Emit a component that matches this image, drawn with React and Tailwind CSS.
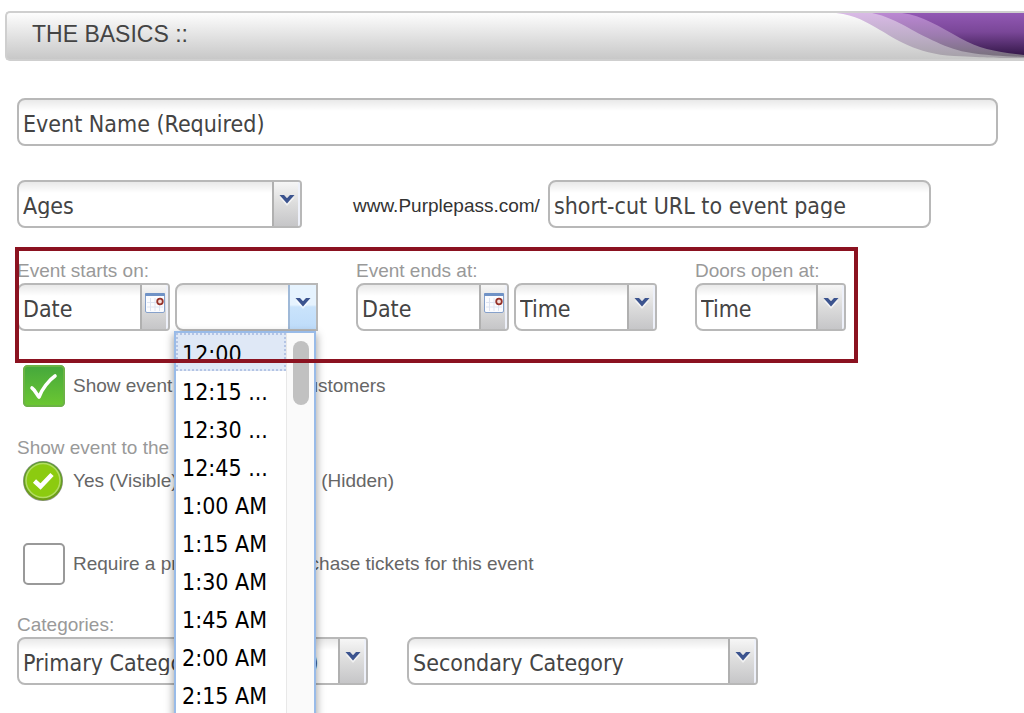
import React, { useState } from 'react';

const times = [
    '12:00', '12:15 ...', '12:30 ...', '12:45 ...', '1:00 AM',
    '1:15 AM', '1:30 AM', '1:45 AM', '2:00 AM', '2:15 AM'
];

const fieldFont = 'font-["DejaVu_Sans_Condensed","DejaVu_Sans",sans-serif] text-[23px] text-[#444] pt-1';

const Chevron = () => (
    <svg className="w-4 h-3" viewBox="0 0 16 12" fill="none">
        <path d="M0.5 2 H5 L8 5 L11 2 H15.5 L8 10.5 Z" fill="#fff" opacity="0.6" transform="translate(0 1.5)" />
        <path d="M0.5 1 H5 L8 4.2 L11 1 H15.5 L8 9.6 Z" fill="#3c548f" />
    </svg>
);

const CalendarIcon = () => (
    <svg className="w-5 h-5" viewBox="0 0 20 20">
        <rect x="0.5" y="0.5" width="19" height="19" rx="1.5" fill="#fbfcff" stroke="#86a1cb" />
        <rect x="0" y="0" width="20" height="3" rx="1" fill="#6f92c6" />
        <path d="M5.5 5 V18 M10 5 V18 M14.5 5 V18 M2 9.5 H18 M2 14 H18" stroke="#dde4f2" />
        <circle cx="15" cy="8.5" r="2.8" fill="#f4dcd6" stroke="#96332b" strokeWidth="1.8" />
    </svg>
);

const boxClass = 'flex h-12 border-2 border-[#b8b8b8] rounded-l-lg bg-linear-to-b from-[#e9e9e9] via-white via-25% to-white overflow-hidden';
const triggerClass = 'flex justify-center shrink-0 w-7 border-l-2 border-[#b0b0b0] bg-linear-to-b from-[#f6f6f6] via-[#dcdcdc] to-[#c6c6c8] shadow-[inset_-2px_0_0_#eef1fa]';

const ComboField = ({ label, text, width }) => (
    <div className={`${boxClass} ${width} rounded-r-sm`}>
        <select aria-label={label} className={`${fieldFont} appearance-none min-w-0 flex-1 pl-1 outline-none`}>
            <option>{text}</option>
        </select>
        <span className={`${triggerClass} pt-3 pointer-events-none`}>
            <Chevron />
        </span>
    </div>
);

const DateField = ({ id }) => (
    <div className={`${boxClass} w-[153px] rounded-r-sm`}>
        <input id={id} type="text" defaultValue="Date" className={`${fieldFont} min-w-0 flex-1 pl-1 outline-none`} />
        <button type="button" aria-label="Pick a date" className={`${triggerClass} pt-2`}>
            <CalendarIcon />
        </button>
    </div>
);

const StartTime = () => {
    const [open, setOpen] = useState(true);
    const [value, setValue] = useState('');

    const pick = (time) => {
        setValue(time);
        setOpen(false);
    };

    return (
        <div className="relative">
            <div className={`${boxClass} w-[143px]`}>
                <input type="text" aria-label="Start time" value={value} onChange={(e) => setValue(e.target.value)} className={`${fieldFont} min-w-0 flex-1 pl-1 outline-none`} />
                <button
                    type="button"
                    aria-label="Show times"
                    onClick={() => setOpen(!open)}
                    className="flex justify-center shrink-0 w-7 pt-3 border-l-2 border-[#9fb9d8] bg-linear-to-b from-[#e6f3fe] from-45% via-[#c9e3fb] via-50% to-[#bedcfa]"
                >
                    <Chevron />
                </button>
            </div>
            {open && (
                <div className="absolute z-10 top-12 -left-px w-[142px] h-[400px] flex bg-white border-2 border-[#99bbe8] shadow-[0_4px_8px_1px_rgba(0,0,0,0.35)] overflow-hidden">
                    <ul role="listbox" aria-label="Start time" className="flex-1">
                        {times.map((time, i) => (
                            <li
                                key={time}
                                role="option"
                                aria-selected={i === 0}
                                onClick={() => pick(time)}
                                className={`h-[38px] px-1 leading-[38px] border-2 border-dotted whitespace-nowrap font-["DejaVu_Sans_Condensed","DejaVu_Sans",sans-serif] text-[23px] text-black ${
                                    i === 0 ? 'bg-[#dfe8f6] border-[#b4c4e4]' : 'border-transparent'
                                }`}
                            >
                                {time}
                            </li>
                        ))}
                    </ul>
                    <div className="w-7 pt-2 flex justify-center bg-[#fafafa] border-l border-[#e8e8e8]">
                        <div className="w-4 h-16 rounded-full bg-[#c1c1c1]"></div>
                    </div>
                </div>
            )}
        </div>
    );
};

const Check = ({ label, defaultChecked }) => (
    <label className="flex items-center w-fit gap-2 ml-1.5 text-[#666]">
        <span className="grid w-[42px] h-[42px]">
            <input type="checkbox" defaultChecked={defaultChecked} className="peer col-start-1 row-start-1 appearance-none w-[42px] h-[42px] rounded-[5px] border-2 border-[#999] bg-white" />
            <svg className="hidden peer-checked:block col-start-1 row-start-1 w-[42px] h-[42px] pointer-events-none" viewBox="0 0 42 42" fill="none">
                <defs>
                    <linearGradient id="checkGreen" x1="0" y1="0" x2="0" y2="1">
                        <stop offset="0" stopColor="#45a83c" />
                        <stop offset="1" stopColor="#6cc732" />
                    </linearGradient>
                </defs>
                <rect x="1" y="1" width="40" height="40" rx="3.5" fill="url(#checkGreen)" stroke="#6cb345" strokeWidth="2" />
                <path d="M9 23 C12 25 14 30 16 32 C19 24 26 15 32 11" stroke="#fff" strokeWidth="3.6" strokeLinecap="round" strokeLinejoin="round" />
            </svg>
        </span>
        {label}
    </label>
);

const Radio = ({ label, defaultChecked }) => (
    <label className="flex items-center gap-2.5 text-[#666]">
        <span className="grid w-10 h-[42px]">
            <input type="radio" name="visibility" defaultChecked={defaultChecked} className="peer col-start-1 row-start-1 self-center appearance-none w-10 h-10 rounded-full border-2 border-[#999] bg-white" />
            <svg className="hidden peer-checked:block col-start-1 row-start-1 self-center w-10 h-10 pointer-events-none" viewBox="0 0 40 40" fill="none">
                <defs>
                    <linearGradient id="radioRim" x1="0" y1="0" x2="0" y2="1">
                        <stop offset="0" stopColor="#5d9c33" />
                        <stop offset="1" stopColor="#6f9e16" />
                    </linearGradient>
                </defs>
                <circle cx="20" cy="20" r="19.5" fill="url(#radioRim)" />
                <circle cx="20" cy="19.5" r="17" fill="#8ccb10" stroke="#b3dd62" strokeWidth="1.6" />
                <path d="M11.5 20 L17.5 25.5 L29 13.5" stroke="#fff" strokeWidth="4.6" />
            </svg>
        </span>
        {label}
    </label>
);

const HeaderSwoosh = () => (
    <svg className="h-[46px] w-[188px] shrink-0" viewBox="0 0 188 46">
        <defs>
            <linearGradient id="pale" x1="0" y1="0" x2="0" y2="1">
                <stop offset="0" stopColor="#d9b9e6" />
                <stop offset="0.5" stopColor="#bfaec9" />
                <stop offset="1" stopColor="#a5a1a7" />
            </linearGradient>
            <linearGradient id="mid" x1="0" y1="0" x2="0" y2="1">
                <stop offset="0" stopColor="#bb87d3" />
                <stop offset="0.5" stopColor="#9d7bb0" />
                <stop offset="1" stopColor="#77707b" />
            </linearGradient>
            <linearGradient id="deep" x1="0" y1="0" x2="0" y2="1">
                <stop offset="0" stopColor="#9258b4" />
                <stop offset="0.45" stopColor="#7a4798" />
                <stop offset="1" stopColor="#35184a" />
            </linearGradient>
        </defs>
        <path d="M0 0 C20 2 30 9 44 17 S80 41 118 43 S160 45 188 45 V0 Z" fill="url(#pale)" />
        <path d="M36 0 C50 3 60 8 71 14 S108 35 130 39 S170 43 188 44 V0 Z" fill="url(#mid)" />
        <path d="M66 0 C86 2 104 14 124 25 S160 39 188 42 V0 Z" fill="url(#deep)" />
    </svg>
);

const App = () => {
    return (
        <div className="relative min-h-screen overflow-hidden bg-white pt-[11px] font-['Liberation_Sans',Arial,sans-serif] text-[19px] leading-6">
            <header className="flex justify-between h-[50px] ml-[5px] border-2 border-r-0 border-[#cfcfcf] rounded-l-[5px] bg-linear-to-b from-[#fdfdfd] to-[#c8c8c8]">
                <h1 className="pl-[25px] pt-[7px] text-[23px] leading-7 text-[#444]">THE BASICS ::</h1>
                <HeaderSwoosh />
            </header>

            <form className="pl-[17px] pr-[26px] pt-[37px] pb-7">
                <div className={`${boxClass} rounded-r-lg`}>
                    <input type="text" aria-label="Event name" defaultValue="Event Name (Required)" className={`${fieldFont} w-full pl-1 outline-none`} />
                </div>

                <div className="flex items-center mt-[34px]">
                    <ComboField label="Ages" text="Ages" width="w-[285px]" />
                    <label htmlFor="shortcut" className="ml-[51px] mr-2 pt-1 text-[#333]">www.Purplepass.com/</label>
                    <div className={`${boxClass} rounded-r-lg w-[383px]`}>
                        <input id="shortcut" type="text" defaultValue="short-cut URL to event page" className={`${fieldFont} w-full pl-1 outline-none`} />
                    </div>
                </div>

                <div className="relative flex w-fit gap-[38px] mt-[31px]">
                    <div>
                        <label htmlFor="startDate" className="block text-[#999]">Event starts on:</label>
                        <div className="flex gap-[5px]">
                            <DateField id="startDate" />
                            <StartTime />
                        </div>
                    </div>
                    <div>
                        <label htmlFor="endDate" className="block text-[#999]">Event ends at:</label>
                        <div className="flex gap-[5px]">
                            <DateField id="endDate" />
                            <ComboField label="End time" text="Time" width="w-[143px]" />
                        </div>
                    </div>
                    <div>
                        <p className="text-[#999]">Doors open at:</p>
                        <ComboField label="Doors open at" text="Time" width="w-[151px]" />
                    </div>
                    {/* Highlight frame around the date and time row */}
                    <div className="absolute z-20 -top-3 -bottom-8 -left-0.5 -right-3 border-4 border-[#8b1220] pointer-events-none"></div>
                </div>

                <div className="mt-[34px]">
                    <Check label="Show event information to customers" defaultChecked />
                </div>

                <fieldset className="mt-[29px]">
                    <legend className="text-[#999]">Show event to the public:</legend>
                    <div className="flex gap-16 ml-1.5">
                        <Radio label="Yes (Visible)" defaultChecked />
                        <Radio label="No (Hidden)" />
                    </div>
                </fieldset>

                <div className="mt-[41px]">
                    <Check label="Require a promocode to purchase tickets for this event" />
                </div>

                <p className="mt-7 text-[#999]">Categories:</p>
                <div className="flex gap-[39px]">
                    <ComboField label="Primary category" text="Primary Category (Required)" width="w-[351px]" />
                    <ComboField label="Secondary category" text="Secondary Category" width="w-[351px]" />
                </div>
            </form>
        </div>
    );
};

export default App;
